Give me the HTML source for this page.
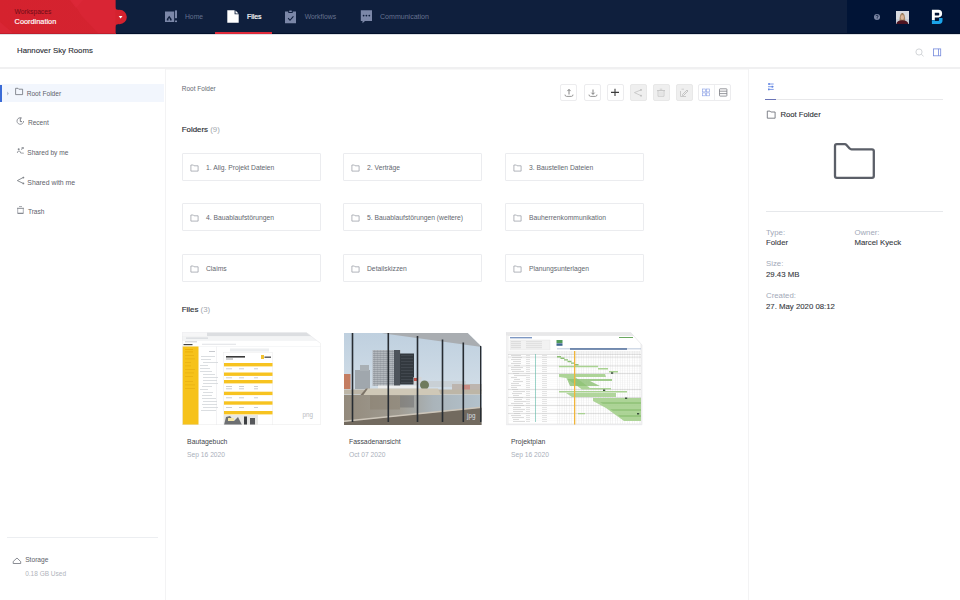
<!DOCTYPE html>
<html><head><meta charset="utf-8">
<style>
*{box-sizing:border-box;margin:0;padding:0}
html,body{width:960px;height:600px;overflow:hidden;background:#fff;font-family:"Liberation Sans",sans-serif}
.a{position:absolute}
.t{position:absolute;white-space:nowrap;line-height:1}
#hdr{left:0;top:0;width:960px;height:34px;background:#0f1f3d}
#hdrR{left:847px;top:0;width:113px;height:34px;background:#011436}
#ws{left:0;top:0;width:116px;height:34px;background:linear-gradient(100deg,#d61f2e 0%,#d8222f 60%,#dc2535 100%);overflow:hidden}
#sub{left:0;top:34px;width:960px;height:33px;background:#fff}
#side{left:0;top:69px;width:166px;height:531px;border-right:1.5px solid #f3f3f4;background:#fff}
#right{left:747.5px;top:69px;width:212.5px;height:531px;border-left:1.5px solid #f3f3f4;background:#fff}
.nav{color:#7d87a2;font-size:6.75px}
.si{color:#5e626a;font-size:6.6px}
.btn{position:absolute;top:84px;width:17px;height:17px;border:1px solid #ececee;border-radius:2px;background:#fff}
.btn.dis{background:#efefef;border-color:#e8e8e8}
.card{position:absolute;width:139px;height:28px;border:1px solid #ebecef;border-radius:1px;background:#fff}
.card .t{left:23px;top:11px;font-size:6.75px;color:#63676f}
.fic{position:absolute;left:8px;top:11px;width:7px;height:6px;border:1px solid #8a8f98;border-radius:1px}
.fic:before{content:"";position:absolute;left:-1px;top:-3px;width:3px;height:2px;border:1px solid #8a8f98;border-bottom:none;border-radius:1px 1px 0 0}
.lbl{color:#a2a9b8;font-size:7.8px}
.val{color:#35383e;font-size:7.8px;-webkit-text-stroke:0.1px #35383e}
</style></head><body>
<!-- header -->
<div id="hdr" class="a"></div>
<div id="hdrR" class="a"></div>
<div class="a" style="left:0;top:33px;width:960px;height:1px;background:#02102b"></div>
<svg class="a" style="left:0;top:0" width="130" height="34" viewBox="0 0 130 34">
<defs><linearGradient id="rg" x1="0" y1="0" x2="1" y2="0"><stop offset="0" stop-color="#d5222e"/><stop offset="1" stop-color="#d42330"/></linearGradient></defs>
<rect x="0" y="0" width="115.5" height="34" fill="url(#rg)"/>

<circle cx="119.6" cy="17" r="7.2" fill="#d5222e"/>
<path d="M115 6.8 Q115.3 10.2 118.6 9.8 L117.5 13 L115 13Z M115 27.2 Q115.3 23.8 118.6 24.2 L117.5 21 L115 21Z" fill="#d5222e"/>
<polygon points="70,0 83,0 76,8" fill="#e0293c" opacity="0.6"/>
<polygon points="72,0 115.5,0 115.5,34 99,34 81,15" fill="#dd2838" opacity="0.55"/>
<polygon points="0,22 0,34 14,34" fill="#de2a3b" opacity="0.5"/>
<polygon points="118.7,16.1 122.5,16.1 120.6,18.5" fill="#fff"/>
</svg>
<div class="a" style="left:0;top:33px;width:115.5px;height:1px;background:#c01d2b"></div>
<div class="t" style="left:14.6px;top:8.8px;font-size:6.7px;color:#6e0d16">Workspaces</div>
<div class="t" style="left:14.6px;top:18px;font-size:7.35px;color:#fff;-webkit-text-stroke:0.15px #fff">Coordination</div>

<!-- nav -->
<svg class="a" style="left:164px;top:10px" width="14" height="13" viewBox="0 0 14 13">
<path d="M1 1.6 H10.2 V12.1 H1Z M2.8 10.6 V9 L5.2 5.8 L7.6 9 V10.6 H5.9 V8.6 H4.5 V10.6Z" fill="#7b87a8" fill-rule="evenodd"/>
<rect x="11" y="0.4" width="2" height="7.8" fill="#7b87a8"/>
<rect x="11" y="10.5" width="2" height="1.6" fill="#7b87a8"/>
</svg>
<div class="t nav" style="left:185px;top:14.2px;color:#66728f">Home</div>
<svg class="a" style="left:227px;top:10px" width="12" height="13" viewBox="0 0 12 13">
<path d="M0.3 0.3 H7.6 L7.6 4.3 L11.7 4.3 V12.7 H0.3Z" fill="#fff"/>
<path d="M8.5 0.5 L11.5 3.5 H8.5Z" fill="#fff"/>
</svg>
<div class="t" style="left:247px;top:13.6px;font-size:6.9px;color:#fff;-webkit-text-stroke:0.2px #fff">Files</div>
<div class="a" style="left:215px;top:32px;width:57px;height:2px;background:#df2a3a"></div>
<svg class="a" style="left:284px;top:9.5px" width="13" height="14" viewBox="0 0 13 14">
<path d="M1 1.5 H4.3 V3 H8.7 V1.5 H12 V13.2 H1Z M4.5 7.8 L6 9.5 L9 6 L9.8 6.7 L6 11 L3.7 8.5Z" fill="#7b87a8" fill-rule="evenodd"/>
<rect x="5" y="0.5" width="3" height="1.6" rx="0.8" fill="#7b87a8"/>
</svg>
<div class="t nav" style="left:304.7px;top:14px;font-size:6.85px;color:#66728f">Workflows</div>
<svg class="a" style="left:360px;top:10px" width="13" height="14" viewBox="0 0 13 14">
<path d="M0.8 0.3 H12 V11 H5 L2.5 13.3 V11 H0.8Z" fill="#7b87a8"/>
<circle cx="3.6" cy="5.6" r="0.9" fill="#0f1f3d"/><circle cx="6.4" cy="5.6" r="0.9" fill="#0f1f3d"/><circle cx="9.3" cy="5.6" r="0.9" fill="#0f1f3d"/>
</svg>
<div class="t nav" style="left:380px;top:13.3px;font-size:7.05px;color:#66728f">Communication</div>

<svg class="a" style="left:872px;top:12px" width="10" height="10" viewBox="0 0 10 10">
<circle cx="5" cy="5" r="3" fill="#7d88a6"/>
<path d="M3.9 4.2 Q4 3.2 5 3.2 Q6.1 3.2 6.1 4.2 Q6.1 4.9 5.1 5.3 V5.9" stroke="#011436" stroke-width="0.8" fill="none"/>
<circle cx="5.1" cy="6.8" r="0.45" fill="#011436"/>
</svg>
<svg class="a" style="left:896px;top:11px" width="13" height="13" viewBox="0 0 13 13">
<rect width="13" height="13" fill="#c9ced6"/>
<rect x="0" y="0" width="13" height="8" fill="#d8dbe0"/>
<path d="M3.6 10 Q3.4 2 6.3 2 Q9.3 2 9.1 10Z" fill="#a58866"/>
<path d="M4.8 3.6 Q6.3 1.5 7.9 3.6 Q7.2 2.6 6.3 2.6 Q5.4 2.6 4.8 3.6Z" fill="#5a4636"/>
<ellipse cx="6.3" cy="6.4" rx="1.6" ry="2.3" fill="#dcb69a"/>
<path d="M0.3 13 Q0.8 9.6 6.3 9.3 Q11.8 9.6 12.4 13Z" fill="#4d1422"/>
</svg>
<svg class="a" style="left:926px;top:6px" width="22" height="22" viewBox="0 0 22 22">
<path d="M5.9 3.85 H12.4 Q16.1 3.85 16.1 7.6 Q16.1 11.4 12.4 11.4 H8.8 V13.9 H5.9Z M8.8 6.8 V9.6 H12.5 Q13.3 9.6 13.3 8.2 Q13.3 6.8 12.5 6.8Z" fill="#fff" fill-rule="evenodd"/>
<path d="M5.9 14.2 H9 V15.1 H12.3 Q13.1 15.1 13.1 14.1 V12.1 H16.5 V14.6 Q16.5 18 13 18 H5.9Z" fill="#1ba4e9"/>
</svg>

<!-- subheader -->
<div id="sub" class="a"></div>
<div class="a" style="left:0;top:34px;width:960px;height:1px;background:#dde1e6"></div>
<div class="a" style="left:0;top:67px;width:960px;height:2px;background:#f0f0f1"></div>
<div class="a" style="left:0;top:69px;width:960px;height:1px;background:#f8f8f8"></div>
<div class="t" style="left:17px;top:46.6px;font-size:7.8px;color:#2d3036;-webkit-text-stroke:0.12px #2d3036">Hannover Sky Rooms</div>
<svg class="a" style="left:914px;top:47px" width="11" height="11" viewBox="0 0 11 11"><circle cx="5" cy="5" r="3.1" fill="none" stroke="#cdd0d4" stroke-width="0.9"/><path d="M7.3 7.3 L9.6 9.3" stroke="#cdd0d4" stroke-width="0.9"/></svg>
<svg class="a" style="left:932px;top:47px" width="10" height="10" viewBox="0 0 10 10"><rect x="1.4" y="1.9" width="7.3" height="6.9" fill="none" stroke="#7489dc" stroke-width="0.8"/><path d="M6.5 1.9 V8.8" stroke="#7489dc" stroke-width="0.8"/></svg>

<!-- sidebar -->
<div id="side" class="a"></div>
<div class="a" style="left:0;top:84px;width:163.5px;height:18px;background:#f2f6fd"></div>
<div class="a" style="left:0;top:84.5px;width:1.5px;height:17px;background:#3a6bd6"></div>
<div class="t si" style="left:26.7px;top:90.6px">Root Folder</div>
<svg class="a" style="left:6px;top:91px" width="4" height="5" viewBox="0 0 4 5"><path d="M1 0.5 L3 2.5 L1 4.5Z" fill="#b8c0d2"/></svg>
<svg class="a" style="left:14px;top:87px" width="10" height="9" viewBox="0 0 10 9"><path d="M1.6 1.3 H4 L4.8 2.2 H8.6 V7.6 H1.6Z" fill="none" stroke="#6d717a" stroke-width="0.8"/></svg>
<div class="t si" style="left:27.9px;top:119.5px">Recent</div>
<svg class="a" style="left:16px;top:116px" width="9" height="10" viewBox="0 0 9 10"><path d="M7.6 5 A3.3 3.3 0 1 1 5.95 2.14" fill="none" stroke="#7a7e86" stroke-width="0.8"/><path d="M4.3 1.8 V5.6 H6" fill="none" stroke="#6f737b" stroke-width="0.9"/></svg>
<div class="t si" style="left:27.3px;top:149.8px">Shared by me</div>
<svg class="a" style="left:16px;top:146px" width="9" height="9" viewBox="0 0 9 9"><circle cx="2.7" cy="3.2" r="1" fill="#85898f"/><path d="M1.3 7 Q1.3 5 3 5 Q4.6 5 4.6 7" fill="none" stroke="#85898f" stroke-width="0.8"/><path d="M4.6 7 L7.8 7.2 M5 3.6 L7.6 2" stroke="#85898f" stroke-width="0.8"/><rect x="5.6" y="1" width="2.2" height="2" fill="#a0a3a8"/></svg>
<div class="t si" style="left:27.3px;top:179.8px;font-size:6.9px">Shared with me</div>
<svg class="a" style="left:16px;top:176px" width="9" height="9" viewBox="0 0 9 9"><path d="M7.6 1.3 L1.3 4.6 L7.6 7.6" fill="none" stroke="#7f8389" stroke-width="0.9"/><circle cx="7.4" cy="1.6" r="0.9" fill="#7f8389"/><circle cx="7.4" cy="7.4" r="0.9" fill="#7f8389"/></svg>
<div class="t si" style="left:27.9px;top:208.5px">Trash</div>
<svg class="a" style="left:16px;top:205px" width="9" height="10" viewBox="0 0 9 10"><path d="M3 1.5 H6" stroke="#8a8e96" stroke-width="0.7"/><path d="M1 3.3 H8" stroke="#777b83" stroke-width="0.9"/><path d="M1.7 3.5 V8.4 H7.3 V3.5" fill="none" stroke="#8a8e96" stroke-width="0.7"/><path d="M1.7 8.3 H7.3" stroke="#777b83" stroke-width="0.9"/></svg>
<div class="a" style="left:7px;top:537px;width:151px;height:1px;background:#eceef1"></div>
<svg class="a" style="left:12px;top:556px" width="10" height="9" viewBox="0 0 10 9"><path d="M1.2 7.5 V5.5 L5 2 L8.7 5.6 V7.5Z" fill="none" stroke="#6d717a" stroke-width="0.8"/></svg>
<div class="t si" style="left:25.2px;top:557px;font-size:6.65px">Storage</div>
<div class="t" style="left:25.2px;top:571px;font-size:6.5px;color:#b0b4bb">0.18 GB Used</div>

<!-- main -->
<div class="t" style="left:181.8px;top:86.2px;font-size:6.5px;color:#666b73">Root Folder</div>
<div class="btn" style="left:560px"></div>
<svg class="a" style="left:564px;top:88px" width="10" height="10" viewBox="0 0 10 10"><path d="M1 6.6 Q1 8.4 2.6 8.4 H7.4 Q9 8.4 9 6.6" fill="none" stroke="#8a8a8a" stroke-width="0.9"/><path d="M5 6.5 V1.6 M3.4 3.1 L5 1.4 L6.6 3.1" fill="none" stroke="#777" stroke-width="0.9"/></svg>
<div class="btn" style="left:583.5px"></div>
<svg class="a" style="left:587.5px;top:88px" width="10" height="10" viewBox="0 0 10 10"><path d="M1 6.6 Q1 8.4 2.6 8.4 H7.4 Q9 8.4 9 6.6" fill="none" stroke="#8a8a8a" stroke-width="0.9"/><path d="M5 1.5 V6.2 M3.4 4.7 L5 6.4 L6.6 4.7" fill="none" stroke="#777" stroke-width="0.9"/></svg>
<div class="btn" style="left:606.5px"></div>
<svg class="a" style="left:610px;top:88px" width="10" height="9" viewBox="0 0 10 9"><path d="M1 4.4 H9 M5 0.8 V8" stroke="#3c3c3c" stroke-width="1.1"/></svg>
<div class="btn dis" style="left:629.5px"></div>
<svg class="a" style="left:633px;top:88px" width="10" height="10" viewBox="0 0 10 10"><path d="M8.3 1.8 L1.4 4.6 L8.3 7.8" fill="none" stroke="#c3c3c3" stroke-width="0.8"/><circle cx="8" cy="1.9" r="0.9" fill="#bdbdbd"/><circle cx="8" cy="7.7" r="0.9" fill="#bdbdbd"/></svg>
<div class="btn dis" style="left:652.5px"></div>
<svg class="a" style="left:656px;top:88px" width="10" height="10" viewBox="0 0 10 10"><path d="M3.8 1.2 H6.2" stroke="#c6c6c6" stroke-width="0.8"/><path d="M1 2.6 H9" stroke="#c0c0c0" stroke-width="0.9"/><path d="M2 2.8 V8.3 H8 V2.8" fill="none" stroke="#c6c6c6" stroke-width="0.8"/><path d="M4 4 V7.2 M6 4 V7.2" stroke="#cccccc" stroke-width="0.6"/></svg>
<div class="btn dis" style="left:675.5px"></div>
<svg class="a" style="left:679px;top:88px" width="10" height="10" viewBox="0 0 10 10"><path d="M1.5 3 V8.5 H7" fill="none" stroke="#c4c4c4" stroke-width="0.9"/><path d="M3.5 6.5 L8 2 L9 3 L4.5 7.5 H3.5Z" fill="none" stroke="#bdbdbd" stroke-width="0.9"/><path d="M2.5 1.2 H5" stroke="#c8c8c8" stroke-width="0.8"/></svg>
<div class="btn" style="left:698px;width:33px"></div>
<div class="a" style="left:714px;top:85px;width:1px;height:15px;background:#eeeff1"></div>
<svg class="a" style="left:701px;top:88px" width="10" height="9" viewBox="0 0 10 9"><g fill="none" stroke="#8ea3e6" stroke-width="0.65"><rect x="1.6" y="1" width="2.9" height="2.9"/><rect x="5.6" y="1" width="2.9" height="2.9"/><rect x="1.6" y="4.9" width="2.9" height="2.9"/><rect x="5.6" y="4.9" width="2.9" height="2.9"/></g></svg>
<svg class="a" style="left:718px;top:88px" width="10" height="9" viewBox="0 0 10 9"><g fill="none" stroke="#74777d" stroke-width="0.75"><rect x="1.5" y="0.8" width="7.4" height="7.3" rx="0.6"/><path d="M1.5 3.2 H8.9 M1.5 5.6 H8.9"/></g></svg>

<div class="t" style="left:181.8px;top:126.3px;font-size:7.86px;color:#2f3238;-webkit-text-stroke:0.18px #2f3238">Folders <span style="color:#a3a7ae;-webkit-text-stroke:0">(9)</span></div>

<div class="card" style="left:182px;top:153px"><svg class="a" style="left:7px;top:10px" width="9" height="8" viewBox="0 0 9 8"><path d="M0.9 1 H3.4 L4.1 1.8 H8.1 V7.1 H0.9Z" fill="none" stroke="#9a9ea5" stroke-width="0.75"/></svg><div class="t">1. Allg. Projekt Dateien</div></div>
<div class="card" style="left:343px;top:153px"><svg class="a" style="left:7px;top:10px" width="9" height="8" viewBox="0 0 9 8"><path d="M0.9 1 H3.4 L4.1 1.8 H8.1 V7.1 H0.9Z" fill="none" stroke="#9a9ea5" stroke-width="0.75"/></svg><div class="t">2. Verträge</div></div>
<div class="card" style="left:505px;top:153px"><svg class="a" style="left:7px;top:10px" width="9" height="8" viewBox="0 0 9 8"><path d="M0.9 1 H3.4 L4.1 1.8 H8.1 V7.1 H0.9Z" fill="none" stroke="#9a9ea5" stroke-width="0.75"/></svg><div class="t">3. Baustellen Dateien</div></div>
<div class="card" style="left:182px;top:203px"><svg class="a" style="left:7px;top:10px" width="9" height="8" viewBox="0 0 9 8"><path d="M0.9 1 H3.4 L4.1 1.8 H8.1 V7.1 H0.9Z" fill="none" stroke="#9a9ea5" stroke-width="0.75"/></svg><div class="t">4. Bauablaufstörungen</div></div>
<div class="card" style="left:343px;top:203px"><svg class="a" style="left:7px;top:10px" width="9" height="8" viewBox="0 0 9 8"><path d="M0.9 1 H3.4 L4.1 1.8 H8.1 V7.1 H0.9Z" fill="none" stroke="#9a9ea5" stroke-width="0.75"/></svg><div class="t">5. Bauablaufstörungen (weitere)</div></div>
<div class="card" style="left:505px;top:203px"><svg class="a" style="left:7px;top:10px" width="9" height="8" viewBox="0 0 9 8"><path d="M0.9 1 H3.4 L4.1 1.8 H8.1 V7.1 H0.9Z" fill="none" stroke="#9a9ea5" stroke-width="0.75"/></svg><div class="t">Bauherrenkommunikation</div></div>
<div class="card" style="left:182px;top:254px"><svg class="a" style="left:7px;top:10px" width="9" height="8" viewBox="0 0 9 8"><path d="M0.9 1 H3.4 L4.1 1.8 H8.1 V7.1 H0.9Z" fill="none" stroke="#9a9ea5" stroke-width="0.75"/></svg><div class="t">Claims</div></div>
<div class="card" style="left:343px;top:254px"><svg class="a" style="left:7px;top:10px" width="9" height="8" viewBox="0 0 9 8"><path d="M0.9 1 H3.4 L4.1 1.8 H8.1 V7.1 H0.9Z" fill="none" stroke="#9a9ea5" stroke-width="0.75"/></svg><div class="t">Detailskizzen</div></div>
<div class="card" style="left:505px;top:254px"><svg class="a" style="left:7px;top:10px" width="9" height="8" viewBox="0 0 9 8"><path d="M0.9 1 H3.4 L4.1 1.8 H8.1 V7.1 H0.9Z" fill="none" stroke="#9a9ea5" stroke-width="0.75"/></svg><div class="t">Planungsunterlagen</div></div>

<div class="t" style="left:181.8px;top:306px;font-size:7.86px;color:#2f3238;-webkit-text-stroke:0.18px #2f3238">Files <span style="color:#a3a7ae;-webkit-text-stroke:0">(3)</span></div>

<svg class="a" style="left:182px;top:332px" width="139" height="93" viewBox="0 0 139 93">
<defs><clipPath id="c1"><polygon points="0,0 124,0 138.5,11.5 138.5,93 0,93"/></clipPath></defs>
<g clip-path="url(#c1)">
<rect width="139" height="93" fill="#fff"/>
<rect x="25" y="0.5" width="114" height="3.6" fill="#dcdee1"/>
<rect x="0.5" y="0.5" width="24.5" height="3.6" fill="#f6f6f7"/>
<rect x="0" y="4.1" width="139" height="0.6" fill="#e8e9eb"/>
<rect x="0" y="4.7" width="139" height="3.3" fill="#f3f4f5"/>
<rect x="4" y="5.6" width="22" height="1" fill="#cfd2d8"/>
<rect x="0" y="8" width="139" height="0.5" fill="#e9eaec"/>
<rect x="3" y="9.4" width="12" height="0.9" fill="#c5c7cc"/>
<rect x="1.5" y="12" width="9" height="1.2" fill="#444"/>
<rect x="20" y="11.8" width="34" height="0.8" fill="#d8dade"/>
<rect x="0" y="14" width="139" height="0.5" fill="#eceef0"/>
<rect x="0.5" y="14.5" width="16" height="78.5" fill="#f6c21a"/>
<rect x="3" y="17" width="8" height="0.8" fill="#e9a800" opacity="0.9"/>
<rect x="3" y="19.5" width="8" height="0.8" fill="#e9a800" opacity="0.9"/>
<rect x="3" y="23" width="9" height="0.8" fill="#e6ad10" opacity="0.8"/>
<rect x="3" y="26.5" width="10" height="0.8" fill="#e6ad10" opacity="0.8"/>
<rect x="3" y="30" width="6" height="0.8" fill="#e6ad10" opacity="0.8"/>
<rect x="3" y="33.5" width="6" height="0.8" fill="#e6ad10" opacity="0.8"/>
<rect x="3" y="37" width="10" height="0.8" fill="#e6ad10" opacity="0.8"/>
<rect x="3" y="40.5" width="9" height="0.8" fill="#e6ad10" opacity="0.8"/>
<rect x="3" y="44" width="8" height="0.8" fill="#e6ad10" opacity="0.8"/>
<rect x="3" y="49" width="8" height="0.8" fill="#e6ad10" opacity="0.8"/>
<rect x="3" y="52.5" width="10" height="0.8" fill="#e6ad10" opacity="0.8"/>
<rect x="3" y="56" width="10" height="0.8" fill="#e6ad10" opacity="0.8"/>
<rect x="34.5" y="14.5" width="0.5" height="78.5" fill="#e6e7ea"/>
<rect x="27" y="19" width="6" height="0.8" fill="#b9bcc2"/>
<rect x="19" y="24" width="14" height="0.8" fill="#d3d6da"/>
<rect x="19" y="27" width="10" height="0.8" fill="#d3d6da"/>
<rect x="21" y="30" width="15" height="0.8" fill="#d3d6da"/>
<rect x="18" y="33" width="8" height="0.8" fill="#d3d6da"/>
<rect x="18" y="36" width="10" height="0.8" fill="#d3d6da"/>
<rect x="18" y="39" width="12" height="0.8" fill="#d3d6da"/>
<rect x="21" y="42" width="12" height="0.8" fill="#d3d6da"/>
<rect x="21" y="45" width="15" height="0.8" fill="#d3d6da"/>
<rect x="21" y="48" width="14" height="0.8" fill="#d3d6da"/>
<rect x="21" y="51" width="15" height="0.8" fill="#d3d6da"/>
<rect x="20" y="54" width="10" height="0.8" fill="#d3d6da"/>
<rect x="18" y="57" width="8" height="0.8" fill="#d3d6da"/>
<rect x="21" y="60" width="10" height="0.8" fill="#d3d6da"/>
<rect x="20" y="63" width="10" height="0.8" fill="#d3d6da"/>
<rect x="20" y="66" width="14" height="0.8" fill="#d3d6da"/>
<rect x="21" y="69" width="14" height="0.8" fill="#d3d6da"/>
<rect x="20" y="72" width="15" height="0.8" fill="#d3d6da"/>
<rect x="21" y="75" width="15" height="0.8" fill="#d3d6da"/>
<rect x="19" y="78" width="15" height="0.8" fill="#d3d6da"/>
<rect x="48" y="16.5" width="39" height="3" fill="#eceef0"/>
<rect x="41.5" y="20.5" width="49" height="73" fill="#fff" stroke="#ececec" stroke-width="0.5"/>
<rect x="44" y="24" width="19" height="1.6" fill="#3a3a3a"/>
<rect x="44" y="26.6" width="7" height="0.8" fill="#8a8a8a"/>
<rect x="79" y="23" width="3" height="4" fill="#f2c230"/><rect x="82.5" y="24.5" width="6.5" height="1.4" fill="#555"/>
<rect x="42" y="31" width="48.5" height="3.4" fill="#f7c320"/>
<rect x="42" y="40.5" width="48.5" height="3.4" fill="#f7c320"/>
<rect x="42" y="48" width="48.5" height="3.4" fill="#f7c320"/>
<rect x="42" y="59.7" width="48.5" height="3.4" fill="#f7c320"/>
<rect x="42" y="69.3" width="48.5" height="3.4" fill="#f7c320"/>
<rect x="42" y="79" width="48.5" height="3.4" fill="#f7c320"/>
<rect x="44" y="36.5" width="6" height="0.7" fill="#b8bbc0"/>
<rect x="57" y="36.5" width="5" height="0.7" fill="#b8bbc0"/>
<rect x="72" y="36.5" width="4" height="0.7" fill="#b8bbc0"/>
<rect x="44" y="45.5" width="6" height="0.7" fill="#b8bbc0"/>
<rect x="57" y="45.5" width="5" height="0.7" fill="#b8bbc0"/>
<rect x="72" y="45.5" width="4" height="0.7" fill="#b8bbc0"/>
<rect x="44" y="54" width="6" height="0.7" fill="#b8bbc0"/>
<rect x="57" y="54" width="5" height="0.7" fill="#b8bbc0"/>
<rect x="72" y="54" width="4" height="0.7" fill="#b8bbc0"/>
<rect x="44" y="56.5" width="6" height="0.7" fill="#b8bbc0"/>
<rect x="57" y="56.5" width="5" height="0.7" fill="#b8bbc0"/>
<rect x="72" y="56.5" width="4" height="0.7" fill="#b8bbc0"/>
<rect x="44" y="65.5" width="6" height="0.7" fill="#b8bbc0"/>
<rect x="57" y="65.5" width="5" height="0.7" fill="#b8bbc0"/>
<rect x="72" y="65.5" width="4" height="0.7" fill="#b8bbc0"/>
<rect x="44" y="75" width="6" height="0.7" fill="#b8bbc0"/>
<rect x="57" y="75" width="5" height="0.7" fill="#b8bbc0"/>
<rect x="72" y="75" width="4" height="0.7" fill="#b8bbc0"/>
<rect x="42" y="83" width="34" height="10" fill="#e7e7e5"/>
<polygon points="42,93 44,85 48,84 52,89 56,85 60,93" fill="#6d6f72"/>
<rect x="62" y="84.5" width="3" height="8.5" fill="#3d4043"/><rect x="68" y="86" width="5" height="7" fill="#56585b"/>
<rect x="46" y="86" width="6" height="3" fill="#f4e6a6"/>
</g>
<polygon points="0.3,0.3 124,0.3 138.7,11.5 138.7,92.7 0.3,92.7" fill="none" stroke="#e7e8ea" stroke-width="0.6"/>
<text x="120.5" y="84.5" font-family="Liberation Sans" font-size="6.3" fill="#b9bcc1">png</text>
</svg>
<svg class="a" style="left:344px;top:333px" width="138" height="92" viewBox="0 0 138 92">
<defs><clipPath id="c2"><polygon points="0,0 123.6,0 137.6,13.8 137.6,92 0,92"/></clipPath>
<linearGradient id="sky" x1="0" y1="0" x2="0" y2="1"><stop offset="0" stop-color="#bfd0df"/><stop offset="1" stop-color="#dce5ec"/></linearGradient>
<linearGradient id="wat" x1="0" y1="0" x2="1" y2="0"><stop offset="0" stop-color="#938a7c"/><stop offset="0.4" stop-color="#a09c92"/><stop offset="0.65" stop-color="#aab4ba"/><stop offset="1" stop-color="#b3c2cc"/></linearGradient></defs>
<g clip-path="url(#c2)">
<rect width="138" height="92" fill="url(#sky)"/>
<polygon points="38,0 138,0 138,14 40,0.6" fill="#a9adb1"/>
<rect x="80" y="48" width="42" height="6" fill="#c9d0d5"/>
<rect x="108" y="51" width="30" height="7" fill="#bdb5af"/><rect x="118" y="52" width="8" height="5" fill="#c98c84"/>
<rect x="0" y="41" width="6.5" height="15" fill="#c47d62"/>
<rect x="11" y="37" width="15" height="19" fill="#a0a7ad"/>
<rect x="16" y="32" width="9" height="6" fill="#a9b0b5"/>
<rect x="28.5" y="17" width="28" height="36" fill="#b3b8bd"/>
<rect x="29" y="18" width="21" height="0.7" fill="#6f767d" opacity="0.5"/>
<rect x="29" y="20" width="21" height="0.7" fill="#6f767d" opacity="0.5"/>
<rect x="29" y="22" width="21" height="0.7" fill="#6f767d" opacity="0.5"/>
<rect x="29" y="24" width="21" height="0.7" fill="#6f767d" opacity="0.5"/>
<rect x="29" y="26" width="21" height="0.7" fill="#6f767d" opacity="0.5"/>
<rect x="29" y="28" width="21" height="0.7" fill="#6f767d" opacity="0.5"/>
<rect x="29" y="30" width="21" height="0.7" fill="#6f767d" opacity="0.5"/>
<rect x="29" y="32" width="21" height="0.7" fill="#6f767d" opacity="0.5"/>
<rect x="29" y="34" width="21" height="0.7" fill="#6f767d" opacity="0.5"/>
<rect x="29" y="36" width="21" height="0.7" fill="#6f767d" opacity="0.5"/>
<rect x="29" y="38" width="21" height="0.7" fill="#6f767d" opacity="0.5"/>
<rect x="29" y="40" width="21" height="0.7" fill="#6f767d" opacity="0.5"/>
<rect x="29" y="42" width="21" height="0.7" fill="#6f767d" opacity="0.5"/>
<rect x="29" y="44" width="21" height="0.7" fill="#6f767d" opacity="0.5"/>
<rect x="29" y="46" width="21" height="0.7" fill="#6f767d" opacity="0.5"/>
<rect x="29" y="48" width="21" height="0.7" fill="#6f767d" opacity="0.5"/>
<rect x="29" y="50" width="21" height="0.7" fill="#6f767d" opacity="0.5"/>
<rect x="30" y="17" width="0.5" height="36" fill="#7d848b" opacity="0.4"/>
<rect x="33" y="17" width="0.5" height="36" fill="#7d848b" opacity="0.4"/>
<rect x="36" y="17" width="0.5" height="36" fill="#7d848b" opacity="0.4"/>
<rect x="39" y="17" width="0.5" height="36" fill="#7d848b" opacity="0.4"/>
<rect x="42" y="17" width="0.5" height="36" fill="#7d848b" opacity="0.4"/>
<rect x="45" y="17" width="0.5" height="36" fill="#7d848b" opacity="0.4"/>
<rect x="48" y="17" width="0.5" height="36" fill="#7d848b" opacity="0.4"/>
<rect x="50" y="17" width="6" height="36" fill="#4e545b"/>
<rect x="56" y="20.5" width="14" height="31" fill="#33393f"/>
<rect x="57" y="22" width="12" height="0.6" fill="#4b5259"/>
<rect x="57" y="25" width="12" height="0.6" fill="#4b5259"/>
<rect x="57" y="28" width="12" height="0.6" fill="#4b5259"/>
<rect x="57" y="31" width="12" height="0.6" fill="#4b5259"/>
<rect x="57" y="34" width="12" height="0.6" fill="#4b5259"/>
<rect x="57" y="37" width="12" height="0.6" fill="#4b5259"/>
<rect x="57" y="40" width="12" height="0.6" fill="#4b5259"/>
<rect x="57" y="43" width="12" height="0.6" fill="#4b5259"/>
<rect x="57" y="46" width="12" height="0.6" fill="#4b5259"/>
<rect x="57" y="49" width="12" height="0.6" fill="#4b5259"/>
<rect x="69.5" y="44" width="8" height="8" fill="#d3d6d9"/><rect x="70" y="45" width="4" height="3" fill="#c3544c"/>
<ellipse cx="80.5" cy="52" rx="4.5" ry="4.5" fill="#6f7b5d"/>
<rect x="34" y="52.5" width="40" height="3" fill="#eceded"/>
<rect x="0" y="56.5" width="138" height="5" fill="#bdb6a7"/>
<polygon points="22,55.5 94,55.5 97,62.5 17,62.5" fill="#cfc8b7"/>
<polygon points="16,62.5 22,55.5 24,55.5 19,62.5" fill="#7d7468"/>
<rect x="0" y="62" width="138" height="26" fill="url(#wat)"/>
<rect x="26" y="62.5" width="30" height="14" fill="#887d6d" opacity="0.5"/>
<rect x="56" y="62.5" width="14" height="12" fill="#5e6062" opacity="0.4"/>
<polygon points="0,88.6 138,74.6 138,92 0,92" fill="#726a5f"/>
<polygon points="0,87.4 138,73.4 138,74.9 0,88.9" fill="#cdc6ba"/>
<rect x="7.7" y="0" width="1.6" height="89" fill="#272c32"/>
<rect x="43.5" y="0" width="1.6" height="89" fill="#272c32"/>
<rect x="72.7" y="3" width="1.6" height="86" fill="#272c32"/>
<rect x="97.7" y="6.5" width="1.6" height="82.5" fill="#272c32"/>
<rect x="118.5" y="9.5" width="1.6" height="79.5" fill="#272c32"/>
<rect x="136.0" y="13" width="1.6" height="76" fill="#272c32"/>
</g>
<text x="123" y="84.5" font-family="Liberation Sans" font-size="6.3" fill="#d9dde0">jpg</text>
</svg>
<svg class="a" style="left:506px;top:332px" width="137" height="94" viewBox="0 0 137 94">
<defs><clipPath id="c3"><polygon points="0,0 124.5,0 136,13 136,93 0,93"/></clipPath></defs>
<g clip-path="url(#c3)">
<rect width="137" height="93" fill="#fafafa"/>
<rect x="0" y="0.5" width="137" height="3" fill="#e8e8e9"/>
<rect x="2" y="3.5" width="133" height="88.5" fill="#fff" stroke="#e2e2e2" stroke-width="0.6"/>
<rect x="4" y="5.2" width="22" height="1.1" fill="#5f7fb5"/>
<rect x="113" y="5" width="14" height="1" fill="#6aa860"/>
<rect x="4" y="8" width="40" height="10" fill="#f2f2f2" stroke="#e0e0e0" stroke-width="0.4"/>
<rect x="5" y="9.5" width="10" height="0.6" fill="#c7c7c7"/><rect x="20" y="9.5" width="16" height="0.6" fill="#d0d0d0"/>
<rect x="5" y="11.5" width="10" height="0.6" fill="#c7c7c7"/><rect x="20" y="11.5" width="16" height="0.6" fill="#d0d0d0"/>
<rect x="5" y="13.5" width="10" height="0.6" fill="#c7c7c7"/><rect x="20" y="13.5" width="16" height="0.6" fill="#d0d0d0"/>
<rect x="5" y="15.5" width="10" height="0.6" fill="#c7c7c7"/><rect x="20" y="15.5" width="16" height="0.6" fill="#d0d0d0"/>
<rect x="50.5" y="8" width="6" height="3" fill="#4f9a5a"/><rect x="50.5" y="11.3" width="6" height="2.5" fill="#3e6690"/>
<rect x="51" y="16.6" width="84" height="0.6" fill="#8aa0c0"/><rect x="64" y="16.4" width="57" height="1.2" fill="#34558a"/>
<rect x="2" y="19" width="133" height="3" fill="#f4f4f4"/>
<rect x="51.00" y="19" width="0.35" height="73" fill="#dedede"/>
<rect x="53.42" y="19" width="0.35" height="73" fill="#dedede"/>
<rect x="55.84" y="19" width="0.35" height="73" fill="#dedede"/>
<rect x="58.26" y="19" width="0.35" height="73" fill="#dedede"/>
<rect x="60.68" y="19" width="0.35" height="73" fill="#dedede"/>
<rect x="63.10" y="19" width="0.35" height="73" fill="#dedede"/>
<rect x="65.52" y="19" width="0.35" height="73" fill="#dedede"/>
<rect x="67.94" y="19" width="0.35" height="73" fill="#dedede"/>
<rect x="70.36" y="19" width="0.35" height="73" fill="#dedede"/>
<rect x="72.78" y="19" width="0.35" height="73" fill="#dedede"/>
<rect x="75.20" y="19" width="0.35" height="73" fill="#dedede"/>
<rect x="77.62" y="19" width="0.35" height="73" fill="#dedede"/>
<rect x="80.04" y="19" width="0.35" height="73" fill="#dedede"/>
<rect x="82.46" y="19" width="0.35" height="73" fill="#dedede"/>
<rect x="84.88" y="19" width="0.35" height="73" fill="#dedede"/>
<rect x="87.30" y="19" width="0.35" height="73" fill="#dedede"/>
<rect x="89.72" y="19" width="0.35" height="73" fill="#dedede"/>
<rect x="92.14" y="19" width="0.35" height="73" fill="#dedede"/>
<rect x="94.56" y="19" width="0.35" height="73" fill="#dedede"/>
<rect x="96.98" y="19" width="0.35" height="73" fill="#dedede"/>
<rect x="99.40" y="19" width="0.35" height="73" fill="#dedede"/>
<rect x="101.82" y="19" width="0.35" height="73" fill="#dedede"/>
<rect x="104.24" y="19" width="0.35" height="73" fill="#dedede"/>
<rect x="106.66" y="19" width="0.35" height="73" fill="#dedede"/>
<rect x="109.08" y="19" width="0.35" height="73" fill="#dedede"/>
<rect x="111.50" y="19" width="0.35" height="73" fill="#dedede"/>
<rect x="113.92" y="19" width="0.35" height="73" fill="#dedede"/>
<rect x="116.34" y="19" width="0.35" height="73" fill="#dedede"/>
<rect x="118.76" y="19" width="0.35" height="73" fill="#dedede"/>
<rect x="121.18" y="19" width="0.35" height="73" fill="#dedede"/>
<rect x="123.60" y="19" width="0.35" height="73" fill="#dedede"/>
<rect x="126.02" y="19" width="0.35" height="73" fill="#dedede"/>
<rect x="128.44" y="19" width="0.35" height="73" fill="#dedede"/>
<rect x="130.86" y="19" width="0.35" height="73" fill="#dedede"/>
<rect x="133.28" y="19" width="0.35" height="73" fill="#dedede"/>
<rect x="2" y="22" width="133" height="0.5" fill="#9a9a9a" opacity="0.6"/>
<rect x="2" y="24.8" width="133" height="0.5" fill="#9a9a9a" opacity="0.6"/>
<rect x="2" y="33.7" width="133" height="0.5" fill="#9a9a9a" opacity="0.6"/>
<rect x="2" y="41" width="133" height="0.5" fill="#9a9a9a" opacity="0.6"/>
<rect x="2" y="57.5" width="133" height="0.5" fill="#9a9a9a" opacity="0.6"/>
<rect x="2" y="65" width="133" height="0.5" fill="#9a9a9a" opacity="0.6"/>
<rect x="2" y="73" width="133" height="0.5" fill="#9a9a9a" opacity="0.6"/>
<rect x="2" y="81" width="133" height="0.5" fill="#9a9a9a" opacity="0.6"/>
<rect x="3" y="26" width="133" height="0.25" fill="#ececec"/>
<rect x="3" y="28" width="133" height="0.25" fill="#ececec"/>
<rect x="3" y="30" width="133" height="0.25" fill="#ececec"/>
<rect x="3" y="32" width="133" height="0.25" fill="#ececec"/>
<rect x="3" y="34" width="133" height="0.25" fill="#ececec"/>
<rect x="3" y="36" width="133" height="0.25" fill="#ececec"/>
<rect x="3" y="38" width="133" height="0.25" fill="#ececec"/>
<rect x="3" y="40" width="133" height="0.25" fill="#ececec"/>
<rect x="3" y="42" width="133" height="0.25" fill="#ececec"/>
<rect x="3" y="44" width="133" height="0.25" fill="#ececec"/>
<rect x="3" y="46" width="133" height="0.25" fill="#ececec"/>
<rect x="3" y="48" width="133" height="0.25" fill="#ececec"/>
<rect x="3" y="50" width="133" height="0.25" fill="#ececec"/>
<rect x="3" y="52" width="133" height="0.25" fill="#ececec"/>
<rect x="3" y="54" width="133" height="0.25" fill="#ececec"/>
<rect x="3" y="56" width="133" height="0.25" fill="#ececec"/>
<rect x="3" y="58" width="133" height="0.25" fill="#ececec"/>
<rect x="3" y="60" width="133" height="0.25" fill="#ececec"/>
<rect x="3" y="62" width="133" height="0.25" fill="#ececec"/>
<rect x="3" y="64" width="133" height="0.25" fill="#ececec"/>
<rect x="3" y="66" width="133" height="0.25" fill="#ececec"/>
<rect x="3" y="68" width="133" height="0.25" fill="#ececec"/>
<rect x="3" y="70" width="133" height="0.25" fill="#ececec"/>
<rect x="3" y="72" width="133" height="0.25" fill="#ececec"/>
<rect x="3" y="74" width="133" height="0.25" fill="#ececec"/>
<rect x="3" y="76" width="133" height="0.25" fill="#ececec"/>
<rect x="3" y="78" width="133" height="0.25" fill="#ececec"/>
<rect x="3" y="80" width="133" height="0.25" fill="#ececec"/>
<rect x="3" y="82" width="133" height="0.25" fill="#ececec"/>
<rect x="3" y="84" width="133" height="0.25" fill="#ececec"/>
<rect x="3" y="86" width="133" height="0.25" fill="#ececec"/>
<rect x="3" y="88" width="133" height="0.25" fill="#ececec"/>
<rect x="5" y="23" width="10" height="0.6" fill="#c4c4c4"/>
<rect x="20" y="23" width="4" height="0.6" fill="#cfcfcf"/><rect x="36" y="23" width="5" height="0.6" fill="#d3d3d3"/>
<rect x="6" y="25" width="10" height="0.6" fill="#c4c4c4"/>
<rect x="20" y="25" width="4" height="0.6" fill="#cfcfcf"/><rect x="36" y="25" width="5" height="0.6" fill="#d3d3d3"/>
<rect x="5" y="27" width="10" height="0.6" fill="#c4c4c4"/>
<rect x="20" y="27" width="4" height="0.6" fill="#cfcfcf"/><rect x="36" y="27" width="5" height="0.6" fill="#d3d3d3"/>
<rect x="7" y="29" width="8" height="0.6" fill="#c4c4c4"/>
<rect x="20" y="29" width="4" height="0.6" fill="#cfcfcf"/><rect x="36" y="29" width="5" height="0.6" fill="#d3d3d3"/>
<rect x="5" y="31" width="10" height="0.6" fill="#c4c4c4"/>
<rect x="20" y="31" width="4" height="0.6" fill="#cfcfcf"/><rect x="36" y="31" width="5" height="0.6" fill="#d3d3d3"/>
<rect x="8" y="33" width="6" height="0.6" fill="#c4c4c4"/>
<rect x="20" y="33" width="4" height="0.6" fill="#cfcfcf"/><rect x="36" y="33" width="5" height="0.6" fill="#d3d3d3"/>
<rect x="5" y="35" width="12" height="0.6" fill="#c4c4c4"/>
<rect x="20" y="35" width="4" height="0.6" fill="#cfcfcf"/><rect x="36" y="35" width="5" height="0.6" fill="#d3d3d3"/>
<rect x="5" y="37" width="10" height="0.6" fill="#c4c4c4"/>
<rect x="20" y="37" width="4" height="0.6" fill="#cfcfcf"/><rect x="36" y="37" width="5" height="0.6" fill="#d3d3d3"/>
<rect x="6" y="39" width="12" height="0.6" fill="#c4c4c4"/>
<rect x="20" y="39" width="4" height="0.6" fill="#cfcfcf"/><rect x="36" y="39" width="5" height="0.6" fill="#d3d3d3"/>
<rect x="7" y="41" width="6" height="0.6" fill="#c4c4c4"/>
<rect x="20" y="41" width="4" height="0.6" fill="#cfcfcf"/><rect x="36" y="41" width="5" height="0.6" fill="#d3d3d3"/>
<rect x="8" y="43" width="12" height="0.6" fill="#c4c4c4"/>
<rect x="20" y="43" width="4" height="0.6" fill="#cfcfcf"/><rect x="36" y="43" width="5" height="0.6" fill="#d3d3d3"/>
<rect x="5" y="45" width="6" height="0.6" fill="#c4c4c4"/>
<rect x="20" y="45" width="4" height="0.6" fill="#cfcfcf"/><rect x="36" y="45" width="5" height="0.6" fill="#d3d3d3"/>
<rect x="8" y="47" width="6" height="0.6" fill="#c4c4c4"/>
<rect x="20" y="47" width="4" height="0.6" fill="#cfcfcf"/><rect x="36" y="47" width="5" height="0.6" fill="#d3d3d3"/>
<rect x="7" y="49" width="10" height="0.6" fill="#c4c4c4"/>
<rect x="20" y="49" width="4" height="0.6" fill="#cfcfcf"/><rect x="36" y="49" width="5" height="0.6" fill="#d3d3d3"/>
<rect x="5" y="51" width="8" height="0.6" fill="#c4c4c4"/>
<rect x="20" y="51" width="4" height="0.6" fill="#cfcfcf"/><rect x="36" y="51" width="5" height="0.6" fill="#d3d3d3"/>
<rect x="5" y="53" width="10" height="0.6" fill="#c4c4c4"/>
<rect x="20" y="53" width="4" height="0.6" fill="#cfcfcf"/><rect x="36" y="53" width="5" height="0.6" fill="#d3d3d3"/>
<rect x="5" y="55" width="6" height="0.6" fill="#c4c4c4"/>
<rect x="20" y="55" width="4" height="0.6" fill="#cfcfcf"/><rect x="36" y="55" width="5" height="0.6" fill="#d3d3d3"/>
<rect x="6" y="57" width="6" height="0.6" fill="#c4c4c4"/>
<rect x="20" y="57" width="4" height="0.6" fill="#cfcfcf"/><rect x="36" y="57" width="5" height="0.6" fill="#d3d3d3"/>
<rect x="7" y="59" width="12" height="0.6" fill="#c4c4c4"/>
<rect x="20" y="59" width="4" height="0.6" fill="#cfcfcf"/><rect x="36" y="59" width="5" height="0.6" fill="#d3d3d3"/>
<rect x="6" y="61" width="10" height="0.6" fill="#c4c4c4"/>
<rect x="20" y="61" width="4" height="0.6" fill="#cfcfcf"/><rect x="36" y="61" width="5" height="0.6" fill="#d3d3d3"/>
<rect x="7" y="63" width="6" height="0.6" fill="#c4c4c4"/>
<rect x="20" y="63" width="4" height="0.6" fill="#cfcfcf"/><rect x="36" y="63" width="5" height="0.6" fill="#d3d3d3"/>
<rect x="7" y="65" width="10" height="0.6" fill="#c4c4c4"/>
<rect x="20" y="65" width="4" height="0.6" fill="#cfcfcf"/><rect x="36" y="65" width="5" height="0.6" fill="#d3d3d3"/>
<rect x="8" y="67" width="8" height="0.6" fill="#c4c4c4"/>
<rect x="20" y="67" width="4" height="0.6" fill="#cfcfcf"/><rect x="36" y="67" width="5" height="0.6" fill="#d3d3d3"/>
<rect x="8" y="69" width="12" height="0.6" fill="#c4c4c4"/>
<rect x="20" y="69" width="4" height="0.6" fill="#cfcfcf"/><rect x="36" y="69" width="5" height="0.6" fill="#d3d3d3"/>
<rect x="5" y="71" width="12" height="0.6" fill="#c4c4c4"/>
<rect x="20" y="71" width="4" height="0.6" fill="#cfcfcf"/><rect x="36" y="71" width="5" height="0.6" fill="#d3d3d3"/>
<rect x="8" y="73" width="10" height="0.6" fill="#c4c4c4"/>
<rect x="20" y="73" width="4" height="0.6" fill="#cfcfcf"/><rect x="36" y="73" width="5" height="0.6" fill="#d3d3d3"/>
<rect x="7" y="75" width="8" height="0.6" fill="#c4c4c4"/>
<rect x="20" y="75" width="4" height="0.6" fill="#cfcfcf"/><rect x="36" y="75" width="5" height="0.6" fill="#d3d3d3"/>
<rect x="7" y="77" width="12" height="0.6" fill="#c4c4c4"/>
<rect x="20" y="77" width="4" height="0.6" fill="#cfcfcf"/><rect x="36" y="77" width="5" height="0.6" fill="#d3d3d3"/>
<rect x="7" y="79" width="10" height="0.6" fill="#c4c4c4"/>
<rect x="20" y="79" width="4" height="0.6" fill="#cfcfcf"/><rect x="36" y="79" width="5" height="0.6" fill="#d3d3d3"/>
<rect x="8" y="81" width="6" height="0.6" fill="#c4c4c4"/>
<rect x="20" y="81" width="4" height="0.6" fill="#cfcfcf"/><rect x="36" y="81" width="5" height="0.6" fill="#d3d3d3"/>
<rect x="5" y="83" width="10" height="0.6" fill="#c4c4c4"/>
<rect x="20" y="83" width="4" height="0.6" fill="#cfcfcf"/><rect x="36" y="83" width="5" height="0.6" fill="#d3d3d3"/>
<rect x="6" y="85" width="12" height="0.6" fill="#c4c4c4"/>
<rect x="20" y="85" width="4" height="0.6" fill="#cfcfcf"/><rect x="36" y="85" width="5" height="0.6" fill="#d3d3d3"/>
<rect x="7" y="87" width="6" height="0.6" fill="#c4c4c4"/>
<rect x="20" y="87" width="4" height="0.6" fill="#cfcfcf"/><rect x="36" y="87" width="5" height="0.6" fill="#d3d3d3"/>
<rect x="7" y="89" width="12" height="0.6" fill="#c4c4c4"/>
<rect x="20" y="89" width="4" height="0.6" fill="#cfcfcf"/><rect x="36" y="89" width="5" height="0.6" fill="#d3d3d3"/>
<rect x="29.2" y="22" width="0.6" height="68" fill="#5bb7a6"/>
<polygon points="51.0,24.0 55.0,24.0 55.0,25.4 51.0,25.4" fill="#8cc073" opacity="1"/>
<polygon points="54.5,25.6 58.5,25.6 58.5,27.0 54.5,27.0" fill="#8cc073" opacity="1"/>
<polygon points="58.0,27.2 62.0,27.2 62.0,28.6 58.0,28.6" fill="#8cc073" opacity="1"/>
<polygon points="61.5,28.8 65.5,28.8 65.5,30.2 61.5,30.2" fill="#8cc073" opacity="1"/>
<polygon points="65.0,30.4 69.0,30.4 69.0,31.8 65.0,31.8" fill="#8cc073" opacity="1"/>
<polygon points="68.5,32.0 72.5,32.0 72.5,33.4 68.5,33.4" fill="#8cc073" opacity="1"/>
<polygon points="53.0,33.8 92.0,33.8 92.0,35.2 53.0,35.2" fill="#a9d291" opacity="1"/>
<polygon points="92.0,36.0 102.0,36.0 102.0,37.6 92.0,37.6" fill="#a9d291" opacity="1"/>
<polygon points="103.0,39.0 112.0,39.0 112.0,40.6 103.0,40.6" fill="#a9d291" opacity="1"/>
<polygon points="53.0,42.0 99.0,42.0 100.0,45.0 69.0,45.0 84.0,56.0 105.0,56.0 105.0,57.5 76.0,57.5 60.0,46.0 53.0,45.0" fill="#a9d291" opacity="0.95"/>
<polygon points="61.0,47.0 106.0,47.0 106.0,49.0 84.0,49.0 94.0,54.0 64.0,54.0" fill="#8cc073" opacity="0.8"/>
<polygon points="53.0,59.0 121.0,59.0 121.0,60.5 53.0,60.5" fill="#a9d291" opacity="1"/>
<polygon points="60.0,61.0 110.0,61.0 110.0,65.0 66.0,65.0" fill="#a9d291" opacity="0.9"/>
<polygon points="87.0,66.0 135.0,66.0 135.0,89.0 118.0,89.0 100.0,76.0 87.0,69.0" fill="#a9d291" opacity="0.95"/>
<polygon points="94.0,70.0 135.0,70.0 135.0,72.0 97.0,72.0" fill="#8cc073" opacity="0.7"/>
<polygon points="104.0,77.0 135.0,77.0 135.0,79.0 107.0,79.0" fill="#8cc073" opacity="0.7"/>
<polygon points="112.0,83.0 135.0,83.0 135.0,85.0 114.0,85.0" fill="#8cc073" opacity="0.7"/>
<polygon points="72.0,81.0 79.0,81.0 79.0,82.2 72.0,82.2" fill="#a9d291" opacity="1"/>
<rect x="105" y="40.30000000000001" width="2.2" height="1.5" fill="#3b4f3d"/>
<rect x="97" y="57.5" width="2.2" height="1.5" fill="#3b4f3d"/>
<rect x="119" y="65.5" width="2.2" height="1.5" fill="#3b4f3d"/>
<rect x="131" y="81" width="2.2" height="1.5" fill="#3b4f3d"/>
<rect x="68" y="19" width="1.3" height="74" fill="#f0b53a"/>
</g>
<polygon points="0.3,0.3 124.5,0.3 136,13 136,92.7 0.3,92.7" fill="none" stroke="#e2e3e5" stroke-width="0.6"/>
</svg>

<div class="t" style="left:187.1px;top:439.2px;font-size:6.85px;color:#43464c">Bautagebuch</div>
<div class="t" style="left:187.1px;top:452.2px;font-size:6.7px;color:#aab0bb">Sep 16 2020</div>
<div class="t" style="left:349px;top:439.2px;font-size:6.85px;color:#43464c">Fassadenansicht</div>
<div class="t" style="left:349px;top:452.2px;font-size:6.7px;color:#aab0bb">Oct 07 2020</div>
<div class="t" style="left:511px;top:439.2px;font-size:6.85px;color:#43464c">Projektplan</div>
<div class="t" style="left:511px;top:452.2px;font-size:6.7px;color:#aab0bb">Sep 16 2020</div>

<!-- right panel -->
<div id="right" class="a"></div>
<div class="a" style="left:766px;top:99px;width:177px;height:1px;background:#e8e8ea"></div>
<div class="a" style="left:765px;top:99px;width:11px;height:1px;background:#6a74b6"></div>
<svg class="a" style="left:766px;top:82px" width="9" height="9" viewBox="0 0 9 9"><g stroke="#5f84e2" stroke-width="0.8"><path d="M2 2 H7.7 M2 4.7 H7.7 M2 7.4 H7.7"/></g><g fill="#5f84e2"><rect x="2.4" y="1.1" width="1.4" height="1.8"/><rect x="5.6" y="3.8" width="1.4" height="1.8"/><rect x="2.1" y="6.5" width="1.4" height="1.8"/></g></svg>
<svg class="a" style="left:766px;top:110px" width="10" height="9" viewBox="0 0 10 9"><path d="M1.3 1.1 H4 L4.8 2 H9.1 V8.2 H1.3Z" fill="none" stroke="#6a6e76" stroke-width="0.85"/></svg>
<div class="t" style="left:780.4px;top:111px;font-size:7.73px;color:#2f3238;-webkit-text-stroke:0.12px #2f3238">Root Folder</div>
<svg class="a" style="left:832px;top:141px" width="45" height="40" viewBox="0 0 45 40"><path d="M3 5 Q3 3.2 4.8 3.2 H12.8 Q13.8 3.2 14.5 4 L17.6 7.4 Q18.3 8.3 19.5 8.3 H40 Q41.8 8.3 41.8 10.1 V35 Q41.8 36.8 40 36.8 H4.8 Q3 36.8 3 35Z" fill="none" stroke="#5b5f68" stroke-width="2.3" stroke-linejoin="round"/></svg>
<div class="a" style="left:766px;top:211px;width:177px;height:1px;background:#e6e8eb"></div>
<div class="t lbl" style="left:766px;top:228.6px">Type:</div>
<div class="t val" style="left:766px;top:238.6px">Folder</div>
<div class="t lbl" style="left:854.4px;top:228.6px">Owner:</div>
<div class="t val" style="left:854.4px;top:238.6px">Marcel Kyeck</div>
<div class="t lbl" style="left:766px;top:260.1px">Size:</div>
<div class="t val" style="left:766px;top:271.1px">29.43 MB</div>
<div class="t lbl" style="left:766px;top:291.9px">Created:</div>
<div class="t val" style="left:766px;top:303.1px">27. May 2020 08:12</div>
</body></html>
